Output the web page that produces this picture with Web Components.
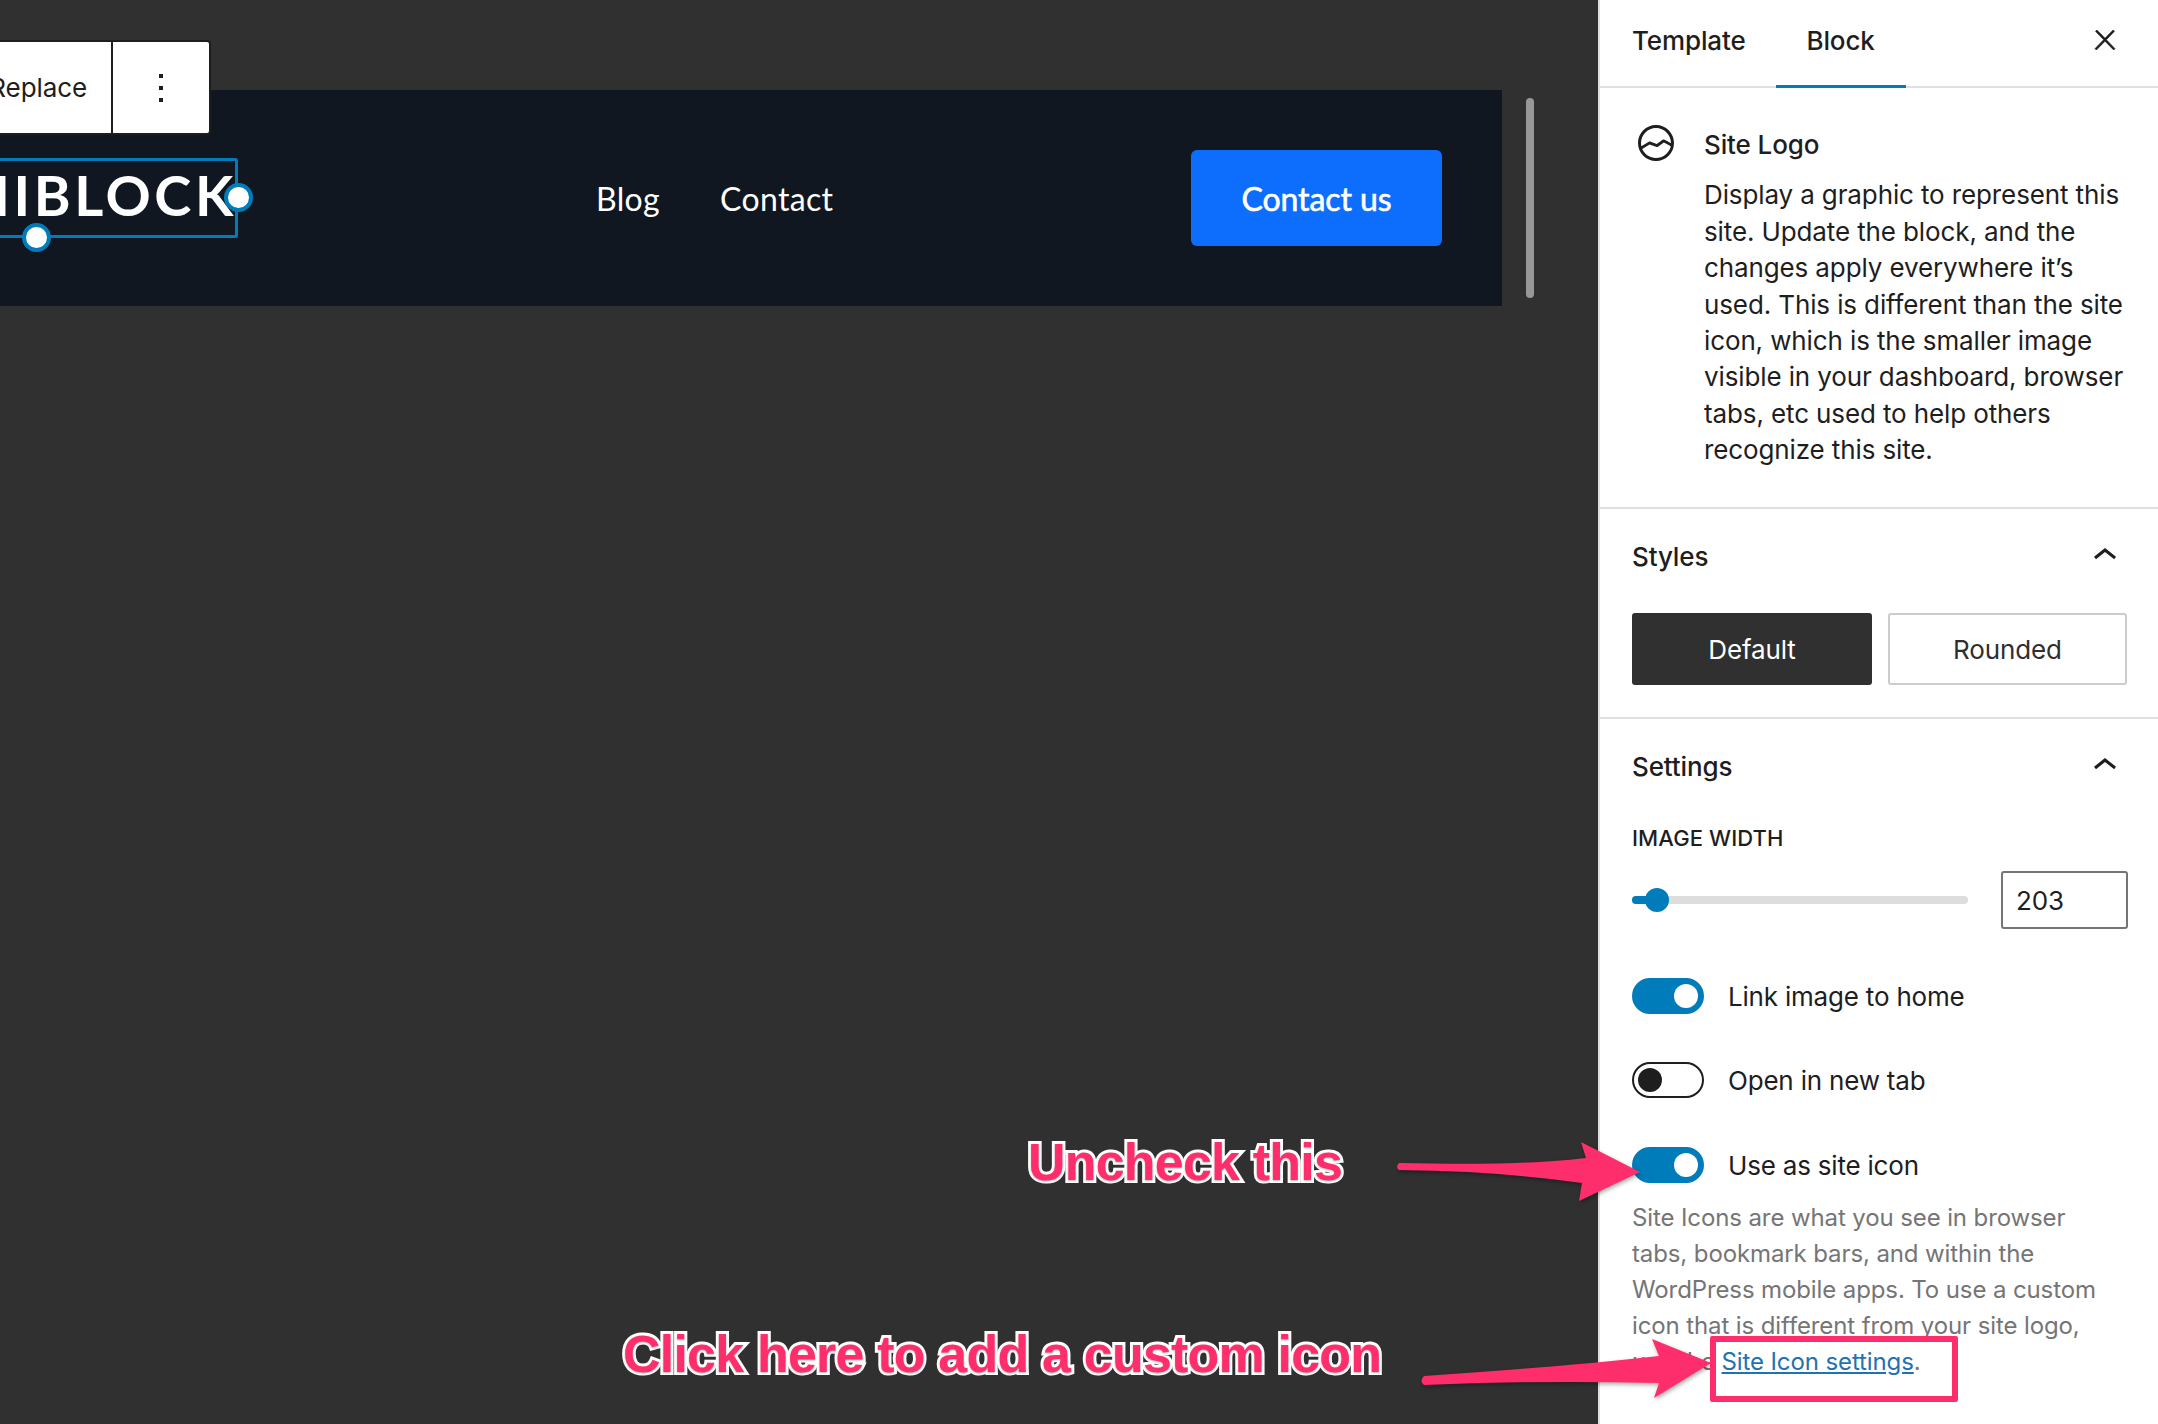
<!DOCTYPE html>
<html lang="en">
<head>
<meta charset="utf-8">
<title>Site Logo block</title>
<style>
  html, body { margin: 0; height: 100%; overflow: hidden; }
  body { display: flex; background: #303030; font-family: Inter, "Liberation Sans", sans-serif; color: #1e1e1e; position: relative; }
</style>
</head>
<body>
  <editor-canvas>
    <block-toolbar></block-toolbar>
    <site-header logo="UNIBLOCK" cta="Contact us">
      <a>Blog</a>
      <a>Contact</a>
    </site-header>
  </editor-canvas>

  <settings-sidebar>
    <block-card title="Site Logo">Display a graphic to represent this site. Update the block, and the changes apply everywhere it’s used. This is different than the site icon, which is the smaller image visible in your dashboard, browser tabs, etc used to help others recognize this site.</block-card>

    <panel-section title="Styles">
      <style-choices></style-choices>
    </panel-section>

    <panel-section title="Settings">
      <range-control label="IMAGE WIDTH" value="203"></range-control>
      <toggle-row on style="margin-top:49px">Link image to home</toggle-row>
      <toggle-row style="margin-top:48px">Open in new tab</toggle-row>
      <toggle-row on style="margin-top:49px">Use as site icon</toggle-row>
      <help-text>Site Icons are what you see in browser tabs, bookmark bars, and within the WordPress mobile apps. To use a custom icon that is different from your site logo, use the <a>Site Icon settings</a>.</help-text>
    </panel-section>
  </settings-sidebar>

  <tutorial-marks></tutorial-marks>

<script>
// small helper, every element below just sets its markup in an open shadow root
function shadow(el, html) {
  el.attachShadow({ mode: 'open' }).innerHTML = html;
}

class EditorCanvas extends HTMLElement {
  constructor() {
    super();
    shadow(this, `
      <style>
        :host { display: flex; flex: 1; min-width: 0; position: relative; padding-top: 90px; align-items: flex-start; background: #303030; }
        .scroll { width: 8px; height: 200px; margin: 8px 0 0 24px; border-radius: 4px; background: #979797; flex: none; }
      </style>
      <slot></slot>
      <div class="scroll"></div>
    `);
  }
}

class BlockToolbar extends HTMLElement {
  constructor() {
    super();
    shadow(this, `
      <style>
        :host { position: absolute; left: -30px; top: 40px; height: 91px; width: 237px; display: flex; background: #fff; border: 2px solid #1e1e1e; border-radius: 4px; z-index: 2; font-size: 26px; letter-spacing: -.1px; }
        .replace { width: 141px; box-sizing: border-box; padding-right: 24px; display: flex; align-items: center; justify-content: flex-end; border-right: 2px solid #1e1e1e; }
        .more { flex: 1; display: flex; align-items: center; justify-content: center; }
        svg { display: block; }
      </style>
      <div class="replace">Replace</div>
      <div class="more">
        <svg width="48" height="48" viewBox="0 0 48 48" fill="#1e1e1e"><rect x="22" y="10" width="4" height="4"/><rect x="22" y="22" width="4" height="4"/><rect x="22" y="34" width="4" height="4"/></svg>
      </div>
    `);
  }
}

class SiteHeader extends HTMLElement {
  constructor() {
    super();
    shadow(this, `
      <style>
        :host { display: flex; align-items: center; width: 1502px; height: 216px; flex: none; background: #101720; color: #fff; font-family: Lato, sans-serif; }
        .logo { position: relative; flex: none; box-sizing: border-box; width: 400px; height: 80px; margin-left: -162px; border: 3px solid #007cba; border-radius: 3px; display: flex; align-items: center; justify-content: flex-end; font-size: 56px; line-height: 70px; font-weight: 700; letter-spacing: 3.6px; white-space: nowrap; }
        .logo span { margin: -6px -2px 0 0; }
        .dot { position: absolute; box-sizing: border-box; width: 29px; height: 29px; border-radius: 50%; background: #fff; border: 4px solid #007cba; }
        .dot.r { right: -18px; top: 22px; }
        .dot.b { left: 181px; bottom: -17px; }
        nav { display: flex; gap: 60px; margin-left: 358px; font-size: 32px; font-weight: 400; letter-spacing: .35px; }
        ::slotted(a) { display: block; }
        .cta { margin-left: auto; margin-right: 60px; width: 251px; height: 96px; border-radius: 6px; background: #0d6efd; display: flex; align-items: center; justify-content: center; font-size: 32px; font-weight: 400; letter-spacing: -.1px; -webkit-text-stroke: .6px #fff; }
      </style>
      <div class="logo"><span>${this.getAttribute('logo')}</span><i class="dot r"></i><i class="dot b"></i></div>
      <nav><slot></slot></nav>
      <div class="cta">${this.getAttribute('cta')}</div>
    `);
  }
}

class SettingsSidebar extends HTMLElement {
  constructor() {
    super();
    shadow(this, `
      <style>
        :host { display: block; flex: none; width: 560px; box-sizing: border-box; height: 1424px; border-left: 2px solid #e0e0e0; background: #fff; font-size: 26px; line-height: 36.4px; letter-spacing: -.12px; }
        header { position: relative; display: flex; height: 88px; box-sizing: border-box; border-bottom: 2px solid #e0e0e0; padding-left: 32px; font-weight: 500; }
        .tab { display: flex; align-items: center; height: 82px; }
        .tab.on { width: 130px; margin-left: 30px; justify-content: center; box-shadow: inset 0 -3px 0 #007cba; height: 88px; padding-bottom: 6px; box-sizing: border-box; }
        .close { position: absolute; right: 37px; top: 24px; display: block; }
      </style>
      <header>
        <div class="tab">Template</div>
        <div class="tab on">Block</div>
        <svg class="close" width="32" height="32" viewBox="0 0 24 24" fill="#1e1e1e" stroke="#1e1e1e" stroke-width=".5"><path d="M13 11.8l6.1-6.3-1-1-6.1 6.2-6.1-6.2-1 1 6.1 6.3-6.5 6.7 1 1 6.5-6.6 6.5 6.6 1-1z"/></svg>
      </header>
      <slot></slot>
    `);
  }
}

class BlockCard extends HTMLElement {
  constructor() {
    super();
    shadow(this, `
      <style>
        :host { display: flex; box-sizing: border-box; height: 421px; padding: 31px 30px 0 32px; border-bottom: 2px solid #e0e0e0; gap: 24px; }
        svg { flex: none; display: block; }
        h2 { margin: 8px 0 14px; font: inherit; font-weight: 500; }
      </style>
      <svg width="48" height="48" viewBox="0 0 24 24" fill="#1e1e1e"><path d="M12 3c-5 0-9 4-9 9s4 9 9 9 9-4 9-9-4-9-9-9zm0 1.5c4.1 0 7.5 3.4 7.5 7.5v.1c-1.4-.8-3.3-1.7-3.4-1.8-.2-.1-.5-.1-.8.1l-2.9 2.1L9 11.3c-.2-.1-.4 0-.6.1l-3.7 2.2c-.1-.5-.2-1-.2-1.5 0-4.2 3.4-7.6 7.5-7.6zm0 15c-3.1 0-5.7-1.9-6.9-4.5l3.7-2.2 3.5 1.2c.2.1.5 0 .7-.1l2.9-2.1c.8.4 2.5 1.2 3.5 1.9-.9 3.3-3.9 5.8-7.4 5.8z"/></svg>
      <div>
        <h2>${this.getAttribute('title')}</h2>
        <slot></slot>
      </div>
    `);
  }
}

class PanelSection extends HTMLElement {
  constructor() {
    super();
    shadow(this, `
      <style>
        :host { display: block; padding: 0 30px 32px 32px; border-bottom: 2px solid #e0e0e0; }
        :host(:last-child) { border-bottom: 0; }
        .head { display: flex; justify-content: space-between; align-items: center; height: 96px; margin-bottom: 8px; font-weight: 500; }
        svg { display: block; margin: -2px -1px 0 0; }
      </style>
      <div class="head">
        <span>${this.getAttribute('title')}</span>
        <svg width="48" height="48" viewBox="0 0 24 24" fill="#1e1e1e"><path d="M6.5 12.4L12 8l5.5 4.4-.9 1.2L12 10l-4.5 3.6-1-1.2z"/></svg>
      </div>
      <slot></slot>
    `);
  }
}

class StyleChoices extends HTMLElement {
  constructor() {
    super();
    shadow(this, `
      <style>
        :host { display: grid; grid-template-columns: 240px 239px; gap: 16px; }
        div { height: 72px; box-sizing: border-box; border-radius: 3px; display: flex; align-items: center; justify-content: center; padding-top: 2px; }
        .on { background: #303030; color: #fff; }
        .off { border: 2px solid #ccc; color: #2f2f2f; }
      </style>
      <div class="on">Default</div>
      <div class="off">Rounded</div>
    `);
  }
}

class RangeControl extends HTMLElement {
  constructor() {
    super();
    shadow(this, `
      <style>
        :host { display: block; }
        label { display: block; font-size: 22px; font-weight: 500; line-height: 30px; letter-spacing: .1px; }
        .row { display: flex; align-items: center; justify-content: space-between; margin-top: 18px; }
        .track { position: relative; width: 336px; height: 8px; border-radius: 4px; background: #ddd; }
        .fill { width: 25px; height: 8px; border-radius: 4px 0 0 4px; background: #007cba; }
        .thumb { position: absolute; left: 13px; top: -8px; width: 24px; height: 24px; border-radius: 50%; background: #007cba; }
        .num { width: 127px; height: 58px; box-sizing: border-box; border: 2px solid #757575; border-radius: 3px; padding: 2px 0 0 13px; display: flex; align-items: center; }
      </style>
      <label>${this.getAttribute('label')}</label>
      <div class="row">
        <div class="track"><div class="fill"></div><div class="thumb"></div></div>
        <div class="num">${this.getAttribute('value')}</div>
      </div>
    `);
  }
}

class ToggleRow extends HTMLElement {
  constructor() {
    super();
    const on = this.hasAttribute('on');
    shadow(this, `
      <style>
        :host { display: flex; align-items: center; gap: 24px; height: 36px; letter-spacing: -.2px; }
        .sw { position: relative; flex: none; width: 72px; height: 36px; box-sizing: border-box; border-radius: 18px; border: 2px solid ${on ? '#007cba' : '#1e1e1e'}; background: ${on ? '#007cba' : '#fff'}; }
        .sw i { position: absolute; top: 4px; width: 24px; height: 24px; border-radius: 50%; background: ${on ? '#fff' : '#1e1e1e'}; ${on ? 'right: 4px' : 'left: 4px'}; }
        span { padding-top: 2px; }
      </style>
      <div class="sw"><i></i></div>
      <span><slot></slot></span>
    `);
  }
}

class HelpText extends HTMLElement {
  constructor() {
    super();
    shadow(this, `
      <style>
        :host { display: block; width: 475px; margin-top: 17px; font-size: 24px; line-height: 36px; color: #757575; letter-spacing: -.11px; }
        ::slotted(a) { color: #2271b1; text-decoration: underline; }
      </style>
      <slot></slot>
    `);
  }
}

// the pink arrows, box and captions someone drew over the screenshot
class TutorialMarks extends HTMLElement {
  constructor() {
    super();
    shadow(this, `
      <style>
        :host { position: absolute; inset: 0; pointer-events: none; z-index: 5; }
        svg { position: absolute; left: 0; top: 0; filter: drop-shadow(1px 2px 2px rgba(0,0,0,.35)); }
        .cap { position: absolute; font-family: "Liberation Sans", sans-serif; font-weight: 700; font-size: 52px; line-height: 56px; letter-spacing: -.8px; white-space: nowrap; color: #fe2e6c; -webkit-text-stroke: 6px #fff; paint-order: stroke fill; text-shadow: 0 1px 2px rgba(0,0,0,.3); }
        .one { left: 1028px; top: 1134px; }
        .two { left: 623px; top: 1326px; }
        .box { position: absolute; left: 1710px; top: 1336px; width: 248px; height: 66px; box-sizing: border-box; border: 6px solid #fe2e6c; border-radius: 2px; }
      </style>
      <svg width="2158" height="1424" fill="#fe2e6c">
        <path d="M1399 1163 Q1520 1166 1586 1158 L1581 1142 L1640 1172 L1579 1201 L1582 1183 Q1500 1171 1399 1170 Q1395 1167 1399 1163Z"/>
        <path d="M1424 1376 Q1560 1367 1659 1356 L1652 1339 L1711 1363 L1654 1398 L1659 1383 Q1540 1380 1424 1385 Q1419 1381 1424 1376Z"/>
      </svg>
      <div class="box"></div>
      <div class="cap one">Uncheck this</div>
      <div class="cap two">Click here to add a custom icon</div>
    `);
  }
}

customElements.define('editor-canvas', EditorCanvas);
customElements.define('block-toolbar', BlockToolbar);
customElements.define('site-header', SiteHeader);
customElements.define('settings-sidebar', SettingsSidebar);
customElements.define('block-card', BlockCard);
customElements.define('panel-section', PanelSection);
customElements.define('style-choices', StyleChoices);
customElements.define('range-control', RangeControl);
customElements.define('toggle-row', ToggleRow);
customElements.define('help-text', HelpText);
customElements.define('tutorial-marks', TutorialMarks);
</script>
</body>
</html>
